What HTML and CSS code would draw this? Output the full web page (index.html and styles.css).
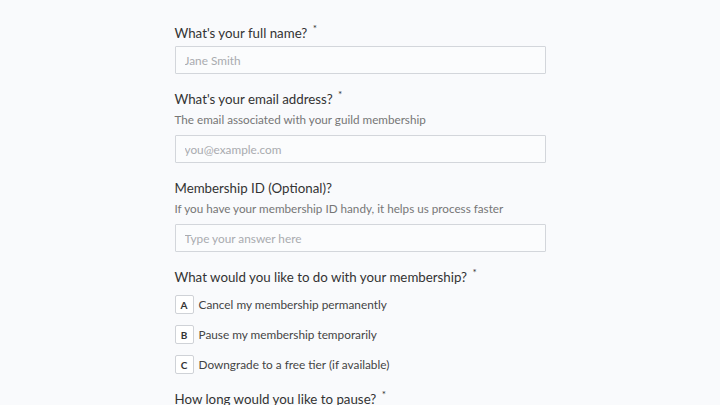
FILE: index.html
```html
<!DOCTYPE html>
<html lang="en">
<head>
  <meta charset="UTF-8">
  <meta name="viewport" content="width=device-width, initial-scale=1.0">
  <title>Membership Form</title>
  <link rel="stylesheet" href="styles.css">
</head>
<body>
  <form class="form" id="membershipForm">
    <div class="question">
      <label class="label" for="fullname">What's your full name? <span class="req">*</span></label>
      <input class="field" type="text" id="fullname" name="fullname" placeholder="Jane Smith">
    </div>

    <div class="question">
      <label class="label" for="email">What's your email address? <span class="req">*</span></label>
      <p class="hint">The email associated with your guild membership</p>
      <input class="field" type="email" id="email" name="email" placeholder="you@example.com">
    </div>

    <div class="question">
      <label class="label" for="memberId">Membership ID (Optional)?</label>
      <p class="hint">If you have your membership ID handy, it helps us process faster</p>
      <input class="field" type="text" id="memberId" name="memberId" placeholder="Type your answer here">
    </div>

    <div class="question">
      <p class="label">What would you like to do with your membership? <span class="req">*</span></p>
      <div class="choices">
        <div class="choice"><span class="key">A</span>Cancel my membership permanently</div>
        <div class="choice"><span class="key">B</span>Pause my membership temporarily</div>
        <div class="choice"><span class="key">C</span>Downgrade to a free tier (if available)</div>
      </div>
    </div>

    <div class="question">
      <p class="label">How long would you like to pause? <span class="req">*</span></p>
    </div>
  </form>
</body>
</html>
```

FILE: styles.css
```css
body {
  font-family: Lato, "Open Sans", sans-serif;
  background-color: #f9fafc;
  margin: 0;
  padding: 0;
  color: #333;
}

.form {
  width: 371px;
  margin: 0 auto;
  padding-top: 23px;
}

.question {
  margin-bottom: 15px;
}

.label {
  display: block;
  margin: 0 0 3px;
  font-size: 13.3px;
  line-height: 20px;
  color: #333;
}

.req {
  font-size: 10px;
  line-height: 0;
  vertical-align: 6px;
  margin-left: 2px;
}

.hint {
  margin: -2px 0 7px;
  font-size: 11.7px;
  line-height: 18px;
  color: #767676;
}

.field {
  display: block;
  width: 100%;
  height: 28px;
  box-sizing: border-box;
  padding: 0 9px;
  border: 1px solid #d3d6db;
  border-radius: 1px;
  background-color: #fbfcfd;
  font-family: inherit;
  font-size: 11.8px;
  color: #333;
}

.field::placeholder {
  color: #a9abaf;
}

.field:focus {
  outline: none;
  border-color: #888;
}

.choices {
  display: flex;
  flex-direction: column;
  gap: 11px;
  padding-top: 5px;
}

.choice {
  display: flex;
  align-items: center;
  gap: 5px;
  font-size: 11.8px;
  color: #444;
  cursor: pointer;
}

.key {
  width: 19px;
  height: 19px;
  box-sizing: border-box;
  display: flex;
  align-items: center;
  justify-content: center;
  border: 1px solid #cfd2d7;
  border-radius: 2px;
  background-color: #fff;
  font-size: 10px;
  font-weight: bold;
  color: #333;
}
```
